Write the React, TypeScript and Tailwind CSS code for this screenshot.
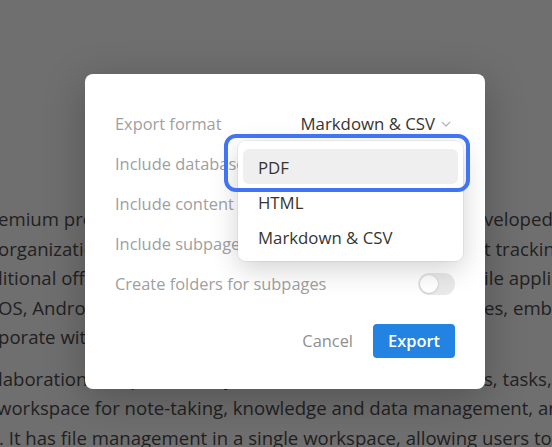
import React from "react";

const FONT = { fontFamily: '"Open Sans", "Noto Sans", "Liberation Sans", sans-serif' };

function Line({ left, right }: { left: string; right?: string }) {
  return (
    <div className="grid grid-cols-[485px_1fr] h-[29.5px] leading-[29.5px]">
      <div className="whitespace-nowrap overflow-hidden -ml-[2px]">{left}</div>
      <div className="whitespace-nowrap overflow-hidden -ml-[1px]">{right ?? ""}</div>
    </div>
  );
}

function Toggle() {
  return (
    <div className="w-[37px] h-[22px] rounded-full bg-[#e9e9e9] p-[2px] flex items-center">
      <div className="w-[18px] h-[18px] rounded-full bg-white shadow-[0_0_0_1px_rgba(0,0,0,0.05),0_1px_2px_rgba(0,0,0,0.1)]" />
    </div>
  );
}

export default function App() {
  const rows = [
    "Include databases",
    "Include content",
    "Include subpages",
    "Create folders for subpages",
  ];
  return (
    <div
      className="relative w-[552px] h-[447px] overflow-hidden bg-[#6f6f6f] text-[#22211f]"
      style={FONT}
    >
      {/* background page */}
      <div className="pt-[110px]">
        <div className="w-[2px] h-[32px] overflow-hidden flex justify-end">
          <span className="text-[36px] leading-[32px] font-bold text-[#222]">n</span>
        </div>
        <div className="mt-[62px] text-[18.6px]">
          <Line left="emium products and services developed" right="veloped by Notion Labs" />
          <Line left="organization, note-taking and project tracking" right="t tracking, and" />
          <Line left="litional offline and mobile applications" right="ile applications" />
          <Line left="OS, Android, with custom pages, embedded" right="es, embedded" />
          <Line left="porate with other users." />
          <div className="mt-[12px]">
            <Line left="laboration and productivity, notes, tasks," right="s, tasks, wikis" />
            <div className="h-[29.5px] leading-[29.5px] whitespace-nowrap -ml-[3px]">
              workspace for note-taking, knowledge and data management, and
            </div>
            <div className="h-[29.5px] leading-[29.5px] whitespace-nowrap -ml-[1px]">
              . It has file management in a single workspace, allowing users to
            </div>
          </div>
        </div>
      </div>

      {/* modal */}
      <div className="absolute left-[85px] top-[74px] w-[400px] bg-white rounded-[8px] shadow-[0_10px_40px_rgba(0,0,0,0.25)] px-[30px] pt-[30px] pb-[31px]">
        <div className="flex flex-col">
          <div className="h-[40px] flex items-center justify-between">
            <span className="text-[16.4px] text-[#a0a0a0]">Export format</span>
            <div className="flex items-center gap-[6px] mr-[4px]">
              <span className="text-[16.8px] text-[#37352f]">Markdown &amp; CSV</span>
              <svg width="10" height="6" viewBox="0 0 10 6" fill="none">
                <polyline points="1,1 5,5 9,1" stroke="#b8b8b8" strokeWidth="1.3" />
              </svg>
            </div>
          </div>
          {rows.map((r) => (
            <div key={r} className="h-[40px] flex items-center justify-between">
              <span className="text-[16.4px] text-[#a0a0a0]">{r}</span>
              <Toggle />
            </div>
          ))}
        </div>
        <div className="mt-[20px] flex items-center justify-end">
          <span className="text-[16.4px] text-[#8f8f8f] mr-[20px]">Cancel</span>
          <button className="w-[82px] h-[34px] rounded-[4px] bg-[#2383e2] text-white text-[16.4px] font-semibold">
            Export
          </button>
        </div>

        {/* dropdown */}
        <div className="absolute left-[153px] top-[67px] w-[225px] bg-white rounded-[8px] shadow-[0_0_0_1px_rgba(0,0,0,0.05),0_8px_28px_rgba(0,0,0,0.18)] pt-[8px] pb-[7px] px-[5px]">
          {["PDF", "HTML", "Markdown & CSV"].map((o, i) => (
            <div
              key={o}
              className={`h-[35px] flex items-center px-[15px] pt-[3px] rounded-[6px] text-[16.8px] text-[#37352f] ${
                i === 0 ? "bg-[#efefef]" : ""
              }`}
            >
              {o}
            </div>
          ))}
        </div>

        {/* highlight ring */}
        <div className="absolute left-[139px] top-[60px] w-[246px] h-[58px] border-[4px] border-[#4174f2] rounded-[12px]" />
      </div>
    </div>
  );
}
